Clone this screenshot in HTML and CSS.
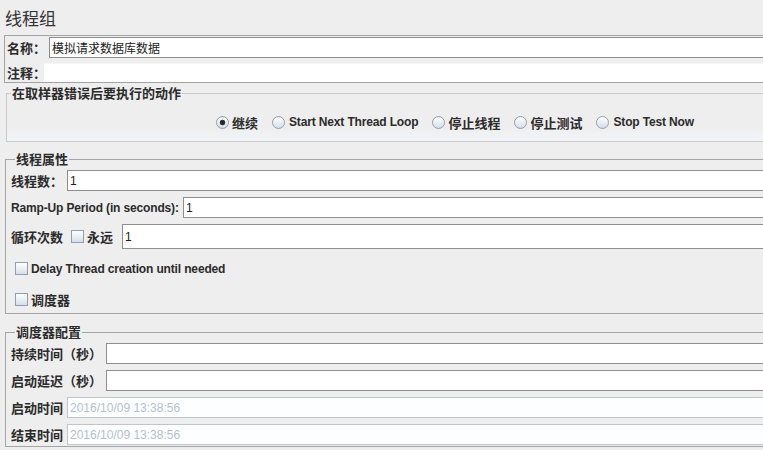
FILE: index.html
```html
<!DOCTYPE html>
<html>
<head>
<meta charset="utf-8">
<link rel="stylesheet" href="styles.css">
</head>
<body>
<div class="title">线程组</div>

<div class="name-panel">
  <div class="nrow first">
    <span class="nlabel">名称：</span>
    <div class="field">模拟请求数据库数据</div>
  </div>
  <div class="nrow second">
    <span class="nlabel short">注释：</span>
    <div class="field comment"></div>
  </div>
</div>

<fieldset class="group g-action">
  <legend>在取样器错误后要执行的动作</legend>
  <div class="radios">
    <label class="opt zh"><span class="rd on"></span>继续</label>
    <label class="opt"><span class="rd"></span>Start Next Thread Loop</label>
    <label class="opt zh"><span class="rd"></span>停止线程</label>
    <label class="opt zh"><span class="rd"></span>停止测试</label>
    <label class="opt"><span class="rd"></span>Stop Test Now</label>
  </div>
</fieldset>

<fieldset class="group g-props">
  <legend>线程属性</legend>
  <div class="frow r1">
    <span class="flabel w56">线程数：</span>
    <div class="field">1</div>
  </div>
  <div class="frow">
    <span class="flabel en w172">Ramp-Up Period (in seconds):</span>
    <div class="field">1</div>
  </div>
  <div class="frow tall">
    <span class="flabel w60">循环次数</span>
    <span class="cb"></span><span class="cbtext forever">永远</span>
    <div class="field">1</div>
  </div>
  <div class="crow c1">
    <span class="cb"></span><span class="cbtext en">Delay Thread creation until needed</span>
  </div>
  <div class="crow c2">
    <span class="cb"></span><span class="cbtext">调度器</span>
  </div>
</fieldset>

<fieldset class="group g-sched">
  <legend>调度器配置</legend>
  <div class="frow r1">
    <span class="flabel w95">持续时间（秒）</span>
    <div class="field"></div>
  </div>
  <div class="frow">
    <span class="flabel w95">启动延迟（秒）</span>
    <div class="field"></div>
  </div>
  <div class="frow">
    <span class="flabel w56">启动时间</span>
    <div class="field dis">2016/10/09 13:38:56</div>
  </div>
  <div class="frow last">
    <span class="flabel w56">结束时间</span>
    <div class="field dis">2016/10/09 13:38:56</div>
  </div>
</fieldset>
</body>
</html>
```

FILE: styles.css
```css
html, body {
  margin: 0;
  padding: 0;
}
body {
  width: 763px;
  height: 450px;
  overflow: hidden;
  background: #eeeeee;
  color: #2b2b2b;
  font-family: "Liberation Sans", "Noto Sans CJK SC", sans-serif;
}

.title {
  height: 35px;
  line-height: 35px;
  padding-left: 5px;
  font-family: "Noto Sans CJK SC", sans-serif;
  font-size: 17px;
  color: #333;
}

/* name / comment panel */
.name-panel {
  margin: 0 -20px 0 4px;
  border: 1px solid #a3a3a3;
}
.nrow {
  display: flex;
  align-items: center;
  height: 21px;
}
.nrow.first { margin-top: 1px; }
.nrow.second { margin-top: 5px; height: 19px; }
.nlabel {
  width: 44px;
  padding-left: 2px;
  box-sizing: border-box;
  flex: none;
  white-space: nowrap;
  overflow: visible;
  font-family: "Noto Sans CJK SC", sans-serif;
  font-size: 13px;
  font-weight: bold;
  color: #2b2b2b;
}
.nlabel.short { width: 39px; }

.field {
  flex: 1;
  align-self: stretch;
  box-sizing: border-box;
  border: 1px solid #8e8e8e;
  background: #ffffff;
  padding-left: 2px;
  font-family: "Liberation Sans", "Noto Sans CJK SC", sans-serif;
  font-size: 12px;
  display: flex;
  align-items: center;
  color: #222;
  white-space: nowrap;
}
.field.comment {
  border: none;
  border-top: 1px solid #f6f6f6;
}
.field.dis {
  border-color: #c2c6cc;
  background: #fdfeff;
  color: #b5c1cd;
}

/* titled groups */
.group {
  margin: 0 -20px 0 5px;
  padding: 0;
  border: 1px solid #a5a5a5;
  min-width: 0;
}
.group legend {
  margin-left: 4px;
  padding: 0 1px;
  font-family: "Noto Sans CJK SC", sans-serif;
  font-size: 13px;
  font-weight: bold;
  line-height: 14px;
  color: #2b2b2b;
}
.g-action {
  margin-top: 3px;
  margin-left: 6px;
  border-color: #c9c9c9;
  background: linear-gradient(to bottom, #eeeeee 0, #eeeeee 70%, #f3f5f8 100%);
}
.g-props { margin-top: 10px; padding: 0 0 1px 5px; }
.g-sched { margin-top: 11px; padding: 0 0 1px 5px; }

/* radios */
.radios {
  display: flex;
  align-items: center;
  height: 18px;
  padding: 13px 0 10px 209px;
}
.opt {
  display: flex;
  align-items: center;
  margin-right: 14px;
  font-size: 12px;
  font-weight: bold;
  letter-spacing: -0.15px;
  white-space: nowrap;
  color: #2b2b2b;
}
.opt.zh {
  font-family: "Noto Sans CJK SC", sans-serif;
  font-size: 13px;
  letter-spacing: 0;
}
.rd {
  width: 13px;
  height: 13px;
  box-sizing: border-box;
  border-radius: 50%;
  border: 1px solid #8f9fb2;
  background: linear-gradient(to bottom, #ffffff 0%, #e6ebf1 60%, #d3dce7 100%);
  margin-right: 3px;
  flex: none;
}
.opt:not(.zh) .rd { margin-right: 4px; }
.rd.on {
  background:
    radial-gradient(circle at 50% 50%, #222 0, #333 2.4px, rgba(0,0,0,0) 3.2px),
    linear-gradient(to bottom, #ffffff 0%, #e6ebf1 60%, #d3dce7 100%);
}

/* form rows */
.frow {
  display: flex;
  align-items: center;
  height: 21px;
  margin-top: 6px;
}
.frow.r1 { margin-top: 4px; }
.frow.tall { height: 25px; }
.flabel {
  flex: none;
  font-family: "Noto Sans CJK SC", sans-serif;
  font-size: 13px;
  font-weight: bold;
  white-space: nowrap;
  color: #2b2b2b;
}
.flabel.en, .cbtext.en {
  font-family: "Liberation Sans", sans-serif;
  font-size: 12px;
  letter-spacing: -0.15px;
}
.w56 { width: 56px; }
.w60 { width: 60px; }
.w95 { width: 95px; }
.w172 { width: 172px; }

.cb {
  flex: none;
  width: 13px;
  height: 13px;
  box-sizing: border-box;
  border: 1px solid #8f9fb2;
  background: linear-gradient(to bottom, #ffffff 0%, #e9eef3 55%, #d5dee8 100%);
  margin-right: 3px;
}
.cbtext {
  font-family: "Noto Sans CJK SC", sans-serif;
  font-size: 13px;
  font-weight: bold;
  white-space: nowrap;
  color: #2b2b2b;
}
.cbtext.forever { width: 35px; flex: none; }

.crow {
  display: flex;
  align-items: center;
  height: 25px;
  padding-left: 4px;
}
.crow.c1 { margin-top: 7px; }
.crow.c2 { margin-top: 6px; }
```
